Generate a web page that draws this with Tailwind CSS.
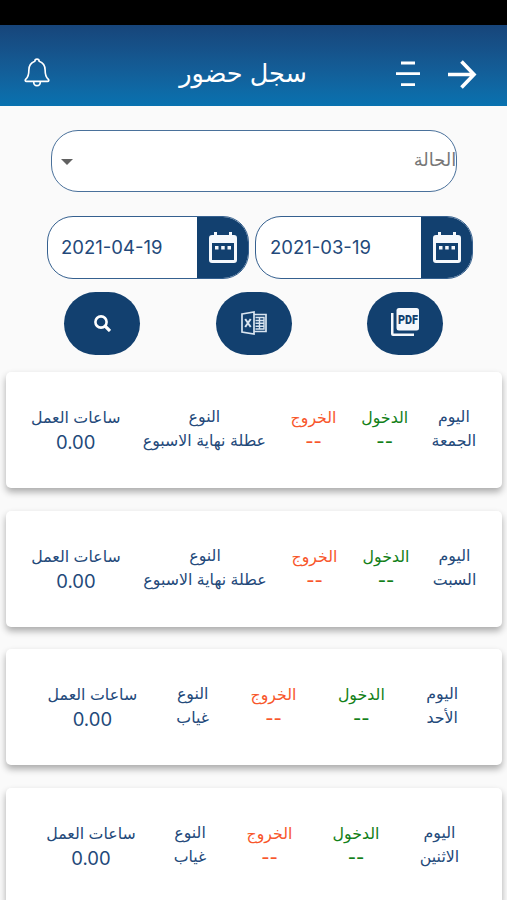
<!DOCTYPE html>
<html lang="ar" dir="rtl">
<head>
  <meta charset="UTF-8">
  <meta name="viewport" content="width=device-width, initial-scale=1.0">
  <title>سجل حضور</title>
  <script src="https://cdn.jsdelivr.net/npm/@tailwindcss/browser@4"></script>
</head>
<body class="h-[900px] overflow-hidden bg-[#fafafa] font-['Inter','DejaVu_Sans',sans-serif] text-[#23497a]">
  <div class="h-[25px] bg-black"></div>

  <!-- Header -->
  <header class="flex h-[81px] items-center bg-linear-to-b from-[#17457a] to-[#0872b0] pt-4 pr-[30px] pl-6 text-white">
    <svg class="h-[30px] w-[30px]" viewBox="0 0 30 30" fill="none" stroke="currentColor" stroke-width="3.6"><path d="M1 15.500h26M14.500 2.500 27 15.500 14.500 28.500"/></svg>
    <svg class="mr-[27px] h-[26px] w-6" viewBox="0 0 24 26" fill="none" stroke="currentColor" stroke-width="2.800"><path d="M5 2h14M0 12.700h24M5 23.700h14"/></svg>
    <h1 class="-mt-0.5 mr-[89px] flex w-[128px] justify-center text-[25.5px] leading-8 whitespace-nowrap">سجل حضور</h1>
    <svg class="mr-auto -mt-[3px] h-[29px] w-[26px]" viewBox="0 0 26 30" fill="none" stroke="currentColor" stroke-width="1.700" stroke-linejoin="round"><path d="M10.800 3.300C10.800.500 15.200.500 15.200 3.300 19.500 4.700 21.400 8 21.400 12.500c0 5.500.8 7.800 3.300 9.500 1 .900.500 2.200-.800 2.200H2.100c-1.300 0-1.800-1.300-.8-2.200 2.500-1.700 3.300-4 3.300-9.500 0-4.500 1.900-7.800 6.200-9.200ZM9.500 24.500c.300 5.500 6.700 5.500 7 0"/></svg>
  </header>

  <!-- Filters -->
  <section class="pt-6">
    <div class="mr-[50px] flex h-[62px] w-[406px] items-center justify-between overflow-hidden rounded-[27px] border-[1.5px] border-[#4a719b] bg-white pl-[9px] text-[#777]">
      <span class="-mt-1 flex w-[42px] justify-center text-[18px] whitespace-nowrap">الحالة</span>
      <svg class="mt-px h-[6px] w-3" viewBox="0 0 12 6" fill="#616161"><path d="M0 0h12L6 6Z"/></svg>
    </div>

    <div class="mt-6 mr-[34px] flex gap-1">
      <div class="flex h-[63px] w-[218px] overflow-hidden rounded-[26px] border-[1.5px] border-[#35608f] bg-white">
        <div class="flex w-[51px] items-center justify-center bg-[#12406f]">
          <svg class="h-[31px] w-7" viewBox="0 0 28 31" fill="#f5f8fc"><path fill-rule="evenodd" d="M5 0h3v3h12V0h3v3h2a3 3 0 0 1 3 3v22a3 3 0 0 1-3 3H3a3 3 0 0 1-3-3V6a3 3 0 0 1 3-3h2ZM3 11v17h22V11Z"/><path d="M6 14h3.500v3.500H6Zm6.200 0h3.500v3.500h-3.500Zm6.300 0H22v3.500h-3.500Z"/></svg>
        </div>
        <span dir="ltr" class="flex flex-1 items-center pt-px pl-[14px] text-[18.5px]">2021-03-19</span>
      </div>
      <div class="mr-[2px] flex h-[63px] w-[202px] overflow-hidden rounded-[26px] border-[1.5px] border-[#35608f] bg-white">
        <div class="flex w-[51px] items-center justify-center bg-[#12406f]">
          <svg class="h-[31px] w-7" viewBox="0 0 28 31" fill="#f5f8fc"><path fill-rule="evenodd" d="M5 0h3v3h12V0h3v3h2a3 3 0 0 1 3 3v22a3 3 0 0 1-3 3H3a3 3 0 0 1-3-3V6a3 3 0 0 1 3-3h2ZM3 11v17h22V11Z"/><path d="M6 14h3.500v3.500H6Zm6.200 0h3.500v3.500h-3.500Zm6.300 0H22v3.500h-3.500Z"/></svg>
        </div>
        <span dir="ltr" class="flex flex-1 items-center pt-px pl-[13px] text-[18.5px]">2021-04-19</span>
      </div>
    </div>

    <div class="mt-[12.5px] mr-16 flex gap-[75.5px]">
      <button class="flex h-[63px] w-[76px] items-center justify-center rounded-[32px] bg-[#12406f]">
        <svg class="-mt-0.5 h-7 w-7" viewBox="0 0 28 28" fill="#f5f8fc"><path d="M0 5h2.500v20.500H23V28H2a2 2 0 0 1-2-2Z"/><rect x="5.500" width="22.500" height="22.500" rx="2.500"/><text x="17" y="15.600" direction="ltr" text-anchor="middle" textLength="20" lengthAdjust="spacingAndGlyphs" font-family="Roboto" font-size="12" font-weight="900" fill="#12406f">PDF</text></svg>
      </button>
      <button class="flex h-[63px] w-[76px] items-center justify-center rounded-[32px] bg-[#12406f]">
        <svg class="h-6 w-[26px]" viewBox="0 0 26 24" fill="none" stroke="#d8e4f0" stroke-width="1.700"><path d="M1 3 13 1v22L1 21ZM13 3.500h12v17H13"/><path stroke-width="2" d="M4.200 8l5.500 8M9.700 8l-5.500 8"/><path stroke-width="1.400" d="M14.500 6.500h8.500v11.500h-8.500M14.500 9.500H23M14.500 12.300H23M14.500 15.200H23M18.500 6.500v11.500"/></svg>
      </button>
      <button class="flex h-[63px] w-[76px] items-center justify-center rounded-[32px] bg-[#12406f]">
        <svg class="h-[17px] w-[17px]" viewBox="0 0 17 17" fill="none" stroke="#fff"><circle cx="7" cy="7" r="5.600" stroke-width="2.600"/><path stroke-width="3.200" d="m11 11 5 5"/></svg>
      </button>
    </div>
  </section>

  <!-- Attendance records -->
  <main class="mt-[17.5px] mr-[5px] flex w-[496px] flex-col gap-[22.700px] text-[15.800px] leading-6 whitespace-nowrap">
    <article class="flex h-[116px] shrink-0 justify-evenly rounded-[5px] bg-white px-0.5 pt-[33px] shadow-[0_4px_7px_rgba(0,0,0,0.32)]">
      <div class="flex w-[43px] flex-col items-center"><span>اليوم</span><span>الجمعة</span></div>
      <div class="flex w-[46px] flex-col items-center pt-px text-[#128018]"><span>الدخول</span><span class="text-[18px] font-medium">--</span></div>
      <div class="flex w-[47px] flex-col items-center pt-px text-[#f8562a]"><span>الخروج</span><span class="text-[18px] font-medium">--</span></div>
      <div class="flex w-[122px] flex-col items-center"><span>النوع</span><span>عطلة نهاية الاسبوع</span></div>
      <div class="flex w-[86px] flex-col items-center pt-px"><span>ساعات العمل</span><span class="text-[18.5px]">0.00</span></div>
    </article>
    <article class="flex h-[116px] shrink-0 justify-evenly rounded-[5px] bg-white px-0.5 pt-[33px] shadow-[0_4px_7px_rgba(0,0,0,0.32)]">
      <div class="flex w-[41px] flex-col items-center"><span>اليوم</span><span>السبت</span></div>
      <div class="flex w-[46px] flex-col items-center pt-px text-[#128018]"><span>الدخول</span><span class="text-[18px] font-medium">--</span></div>
      <div class="flex w-[47px] flex-col items-center pt-px text-[#f8562a]"><span>الخروج</span><span class="text-[18px] font-medium">--</span></div>
      <div class="flex w-[122px] flex-col items-center"><span>النوع</span><span>عطلة نهاية الاسبوع</span></div>
      <div class="flex w-[86px] flex-col items-center pt-px"><span>ساعات العمل</span><span class="text-[18.5px]">0.00</span></div>
    </article>
    <article class="flex h-[116px] shrink-0 justify-evenly rounded-[5px] bg-white px-0.5 pt-[33px] shadow-[0_4px_7px_rgba(0,0,0,0.32)]">
      <div class="flex w-[33px] flex-col items-center"><span>اليوم</span><span>الأحد</span></div>
      <div class="flex w-[46px] flex-col items-center pt-px text-[#128018]"><span>الدخول</span><span class="text-[18px] font-medium">--</span></div>
      <div class="flex w-[47px] flex-col items-center pt-px text-[#f8562a]"><span>الخروج</span><span class="text-[18px] font-medium">--</span></div>
      <div class="flex w-[32px] flex-col items-center"><span>النوع</span><span>غياب</span></div>
      <div class="flex w-[86px] flex-col items-center pt-px"><span>ساعات العمل</span><span class="text-[18.5px]">0.00</span></div>
    </article>
    <article class="flex h-[116px] shrink-0 justify-evenly rounded-[5px] bg-white px-0.5 pt-[33px] shadow-[0_4px_7px_rgba(0,0,0,0.32)]">
      <div class="flex w-[41px] flex-col items-center"><span>اليوم</span><span>الاثنين</span></div>
      <div class="flex w-[46px] flex-col items-center pt-px text-[#128018]"><span>الدخول</span><span class="text-[18px] font-medium">--</span></div>
      <div class="flex w-[47px] flex-col items-center pt-px text-[#f8562a]"><span>الخروج</span><span class="text-[18px] font-medium">--</span></div>
      <div class="flex w-[32px] flex-col items-center"><span>النوع</span><span>غياب</span></div>
      <div class="flex w-[86px] flex-col items-center pt-px"><span>ساعات العمل</span><span class="text-[18.5px]">0.00</span></div>
    </article>
  </main>
</body>
</html>
